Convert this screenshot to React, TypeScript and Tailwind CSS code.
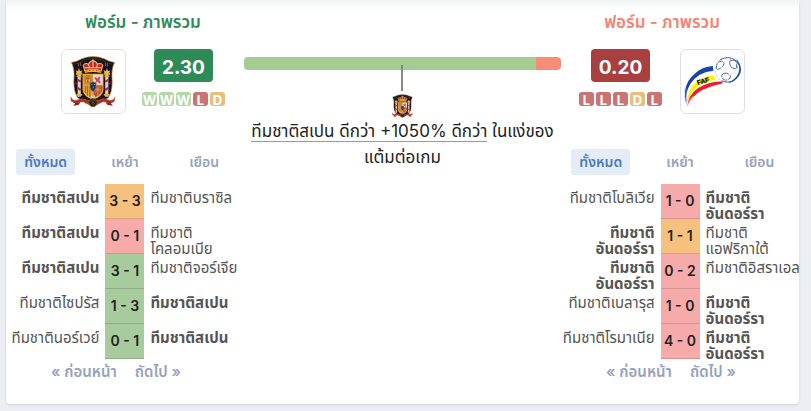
import {useState} from 'react';
import clsx from 'clsx';

type Result = 'W' | 'D' | 'L';

interface Match {home: string;
 away: string;
 score: string;
 result: Result;
 side: 'home' | 'away';}

const SPAIN = 'ทีมชาติสเปน';
const ANDORRA = 'ทีมชาติ\nอันดอร์รา';

const spainMatches: Match[] = [
 {home: SPAIN, away: 'ทีมชาติบราซิล', score: '3 - 3', result: 'D', side: 'home'},
 {home: SPAIN, away: 'ทีมชาติ\nโคลอมเบีย', score: '0 - 1', result: 'L', side: 'home'},
 {home: SPAIN, away: 'ทีมชาติจอร์เจีย', score: '3 - 1', result: 'W', side: 'home'},
 {home: 'ทีมชาติไซปรัส', away: SPAIN, score: '1 - 3', result: 'W', side: 'away'},
 {home: 'ทีมชาตินอร์เวย์', away: SPAIN, score: '0 - 1', result: 'W', side: 'away'},
];

const andorraMatches: Match[] = [
 {home: 'ทีมชาติโบลิเวีย', away: ANDORRA, score: '1 - 0', result: 'L', side: 'away'},
 {home: ANDORRA, away: 'ทีมชาติ\nแอฟริกาใต้', score: '1 - 1', result: 'D', side: 'home'},
 {home: ANDORRA, away: 'ทีมชาติอิสราเอล', score: '0 - 2', result: 'L', side: 'home'},
 {home: 'ทีมชาติเบลารุส', away: ANDORRA, score: '1 - 0', result: 'L', side: 'away'},
 {home: 'ทีมชาติโรมาเนีย', away: ANDORRA, score: '4 - 0', result: 'L', side: 'away'},
];

const pillColor = {W: 'bg-[#b5d6a7]', D: 'bg-[#e9bd7c]', L: 'bg-[#c97474]'};
const cellColor = {W: 'bg-[#a8cb9e] border-[#8fae87]', D: 'bg-[#f6c17f] border-[#d5a578]', L: 'bg-[#f6abaa] border-[#d59392]'};

function SpainCrest({className}: {className: string}) {
 return (<svg className={className} viewBox="31 16 132 148" aria-hidden="true">
 <path d="M35 34 Q52 31 65 23 Q97 11 129 23 Q142 31 159 34 Q149 52 152 86 Q153 119 141 135 Q120 151 97 161 Q73 151 53 135 Q41 119 42 86 Q45 52 35 34Z" fill="#17121f" stroke="#c5983a" strokeWidth="2" />
 <path d="M43 39 Q59 36 70 28 Q97 18 124 28 Q135 36 151 39" fill="none" stroke="#4e3b28" strokeWidth="2" />
 <path d="M55 36 v9 M61 34 v10 M133 34 v10 M139 36 v9" stroke="#8c6c2d" strokeWidth="2.5" />
 {/* crown */}
 <path d="M73 57 L69 42 Q74 34 84 39 Q89 29 97 29 Q105 29 110 39 Q120 34 125 42 L121 57Z" fill="#c22430" stroke="#f3c14c" strokeWidth="3" />
 <path d="M97 25 v24 M84 38 l3 13 M110 38 l-3 13 M73 49 h48" stroke="#f7d476" strokeWidth="3" />
 <path d="M72 57 Q97 49 122 57 L120 64 Q97 58 74 64Z" fill="#efb13e" />
 <path d="M76 59 h3 m7 -2 h3 m7 -1 h3 m7 1 h3 m7 2 h3" stroke="#b92a31" strokeWidth="3" />
 {/* pillars */}
 <path d="M53 67 h9 V132 h-9Z M132 67 h9 V132 h-9Z" fill="#d6d0d4" />
 <path d="M48 67 h18 M50 74 h14 M49 127 h17 M128 67 h18 M130 74 h14 M128 127 h17" stroke="#e7a637" strokeWidth="5" />
 <path d="M50 65 l-2 -9 5 3 4 -7 4 7 5 -3 -2 9Z M130 65 l-2 -9 5 3 4 -7 4 7 5 -3 -2 9Z" fill="#f2bd47" />
 <path d="M57 51 v5 M137 51 v5" stroke="#c83434" strokeWidth="4" />
 <path d="M53 84 l9 5 M53 107 l9 6 M132 89 l9 -5 M132 113 l9 -6" stroke="#bc2530" strokeWidth="6" />
 <path d="M47 95 h6 M141 95 h6" stroke="#bc2530" strokeWidth="5" />
 {/* quartered shield */}
 <path d="M67 66 H127 V113 Q124 133 97 141 Q70 133 67 113Z" fill="#e4b24c" />
 <path d="M70 69 H97 V98 H70Z" fill="#de8b2a" />
 <path d="M97 69 H124 V98 H97Z" fill="#e7d8dd" />
 <path d="M70 100 H96 V135 Q74 127 70 112Z" fill="#e9a22e" />
 <path d="M98 100 H124 V112 Q120 128 98 135Z" fill="#bd4a31" />
 <path d="M76 76 v-4 h4 v3 h4 v-3 h4 v4 M76 78 h13 v12 H75Z" fill="#f4c94f" stroke="#b2572a" strokeWidth="2" />
 <path d="M82 90 v-6 M78 81 h8" stroke="#763622" strokeWidth="3" />
 <path d="M104 76 l7 5 2 -7 6 3 -4 8 5 6 -5 3 -5 -6 -6 6 2 -10 -5 -3Z" fill="#b64b75" />
 <path d="M75 101 V121 M81 101 V129 M88 101 V132" stroke="#b8582b" strokeWidth="3" />
 <path d="M103 104 l16 15 M119 103 l-16 18 M102 112 h19 M111 102 v27" stroke="#eaa445" strokeWidth="2" />
 <path d="M88 92 Q97 87 106 92 V105 Q104 114 97 118 Q90 114 88 105Z" fill="#173974" stroke="#b68d43" strokeWidth="2" />
 <path d="M93 97 h2 m5 0 h2 m-5 8 h2" stroke="#d5b765" strokeWidth="3" />
 <path d="M91 133 L97 119 L103 133 L97 138Z" fill="#ddd7d2" />
 <path d="M97 121 v11" stroke="#8e5b61" strokeWidth="2" />
 {/* ribbon and ball */}
 <path d="M33 133 Q39 145 52 142 Q67 134 79 142 Q97 148 115 142 Q127 134 142 142 Q155 145 160 133 L159 145 Q151 150 139 149 Q124 144 113 151 Q97 156 81 151 Q70 144 55 149 Q42 150 34 145Z" fill="#b51f2c" stroke="#ce7b38" strokeWidth="1.5" />
 <path d="M36 147 l10 4 -6 7 15 -2 6 -7 M158 147 l-10 4 6 7 -15 -2 -6 -7" fill="#8f2027" />
 <circle cx="97" cy="149" r="12" fill="#24201d" stroke="#82612f" strokeWidth="2" />
 <path d="M87 146 l10 -5 10 5 M90 154 l7 -6 7 6 M97 141 v18" fill="none" stroke="#846937" strokeWidth="1.5" />
 </svg>);
}

function AndorraCrest({className}: {className: string}) {
 return (<svg className={className} viewBox="0 0 192 192" aria-hidden="true">
 <path d="M97 49 Q66 51 45 69 Q18 90 12 124 Q10 145 16 163 Q12 129 29 103 Q52 67 99 63Z" fill="#1846a2" />
 <path d="M13 115 Q10 142 16 163 M17 117 Q14 139 17 157" fill="none" stroke="#6f8cc3" strokeWidth="1.5" />
 <path d="M100 78 Q66 80 42 102 Q22 121 18 157 Q34 119 63 103 Q81 93 104 92Z" fill="#fff100" />
 <path d="M127 96 Q86 94 52 116 Q24 135 19 170 Q34 139 65 122 Q93 108 126 102Z" fill="#ec1d2b" />
 <path d="M17 171 Q19 149 28 137 M19 172 Q26 150 36 141" fill="none" stroke="#ffc2bd" strokeWidth="2" />
 <text x="51" y="107" transform="rotate(-17 51 107)" fontFamily="Liberation Sans" fontSize="20" fontWeight="900" fill="#15130f" stroke="#15130f" strokeWidth="1">FAF</text>
 <circle cx="142" cy="61" r="38" fill="white" stroke="#95a8cf" strokeWidth="1.5" strokeDasharray="9 3" />
 <path d="M119 30 Q145 15 168 33 Q190 57 174 80 Q155 106 124 94" fill="none" stroke="#2450a0" strokeWidth="2.5" />
 <path d="M170 30 Q191 57 174 81 Q163 95 148 99 Q169 88 176 70 Q184 50 170 30Z" fill="#1846a2" stroke="#1846a2" strokeWidth="2" />
 <g fill="white" stroke="#426bb2" strokeWidth="3">
 <path d="M108 57 Q107 35 123 34 Q135 35 129 47 Q121 59 110 59" strokeDasharray="16 3" />
 <path d="M150 31 Q145 48 157 55 Q168 60 173 52 Q165 54 172 39 Q165 29 150 31" />
 <path d="M129 72 Q141 66 151 79 Q151 91 135 92 Q121 87 125 76Z" strokeDasharray="18 3" />
 </g>
 </svg>);
}

function FormPills({results}: {results: Result[]}) {
 return (<div className="flex gap-0.5">
 {results.map((r, i) => (<span
 key={i}
 className={clsx('flex h-3.5 w-[15px] items-center justify-center rounded-[3px] pt-0.5 text-[13px] leading-3 font-bold text-white', pillColor[r])}
 >{r}</span>))}
 </div>);
}

function Rating({value, color, results}: {value: string; color: string; results: Result[]}) {
 return (<div className="flex flex-col items-center gap-2.5">
 <span className={clsx('rounded px-2 pt-1 text-[19px] leading-[29px] font-bold text-white', color)}>{value}</span>
 <FormPills results={results} />
 </div>);
}

function CrestBox({children}: {children: React.ReactNode}) {
 return (<div className="flex size-[65px] items-center justify-center rounded-md border border-[#dfe0e6] bg-white">
 {children}
 </div>);
}

function MatchList({matches}: {matches: Match[]}) {
 const [tab, setTab] = useState(0);

 return (<div>
 <div className="grid grid-cols-3 justify-items-center">
 {['ทั้งหมด', 'เหย้า', 'เยือน'].map((label, i) => (<button
 key={label}
 onClick={() => setTab(i)}
 className={clsx('rounded-[3px] px-2 text-sm leading-[26px] font-semibold', tab === i? 'bg-[#e4ecf6] text-[#4d7ac0]': 'text-[#95a2ba]')}
 >{label}</button>))}
 </div>
 <table className="mt-[9px] w-full table-fixed border-collapse text-[15px] leading-4 text-[#555]">
 <tbody>
 {matches.map((m, i) => (<tr key={i} className="align-top">
 <td className={clsx('p-0 pr-1.5 text-right', m.side === 'home' && 'font-bold')}>
 <div className="h-[35px] overflow-hidden pt-1.5 whitespace-pre">{m.home}</div>
 </td>
 <td className="w-[39px] p-0">
 <div className={clsx('h-[35px] border-b text-center text-sm leading-[34px] font-semibold whitespace-nowrap text-[#222]', cellColor[m.result])}>{m.score}</div>
 </td>
 <td className={clsx('p-0 pl-1.5', m.side === 'away' && 'font-bold')}>
 <div className="h-[35px] overflow-hidden pt-1.5 whitespace-pre">{m.away}</div>
 </td>
 </tr>))}
 </tbody>
 </table>
 <div className="mt-1 flex justify-center text-[15px] leading-[18px] font-semibold text-[#95a2ba]">
 <button className="mr-[18px]">« ก่อนหน้า</button>
 <button className="mr-[18px]">ถัดไป »</button>
 </div>
 </div>);
}

export default function App() {
 return (<div className="min-h-screen bg-[#ebeff3] pr-3 pb-[7px] pl-1.5 font-[Inter,'Noto_Sans_Thai','Noto_Sans',sans-serif]">
 <main className="rounded-b bg-white shadow-sm">
 <div className="h-2.5 bg-linear-to-b from-[#f0f3f3] to-white" />
 <div className="grid grid-cols-[3fr_4fr_3fr] pb-[23px]">
 <section>
 <div className="flex flex-col items-center pl-9">
 <h2 className="text-[17px] leading-6 font-semibold text-[#2e8b57]">ฟอร์ม - ภาพรวม</h2>
 <div className="mt-[15px] flex gap-4">
 <CrestBox><SpainCrest className="h-[54px] w-[46px]" /></CrestBox>
 <Rating value="2.30" color="bg-[#2e8b57]" results={['W', 'W', 'W', 'L', 'D']} />
 </div>
 </div>
 <div className="mt-[35px]"><MatchList matches={spainMatches} /></div>
 </section>

 <section className="flex flex-col items-center pt-[47px]">
 <div className="flex h-[13px] w-full overflow-hidden rounded">
 <div className="w-[92%] bg-[#a3cd92]" />
 <div className="flex-1 bg-[#f78d78]" />
 </div>
 <div className="relative -mt-[5px] h-[26px] w-0.5 bg-[#888]" />
 <SpainCrest className="mt-[3px] h-6 w-[21px]" />
 <p className="px-1 text-center text-[17px] leading-[26px] text-[#222]">
 <span className="border-b border-[#75be4b]">ทีมชาติสเปน ดีกว่า +1050% ดีกว่า</span> ในแง่ของ<br />แต้มต่อเกม
 </p>
 </section>

 <section>
 <div className="flex flex-col items-center pr-9">
 <h2 className="text-[17px] leading-6 font-semibold text-[#fa8072]">ฟอร์ม - ภาพรวม</h2>
 <div className="mt-[15px] flex gap-[18px]">
 <Rating value="0.20" color="bg-[#a94040]" results={['L', 'L', 'L', 'D', 'L']} />
 <CrestBox><AndorraCrest className="size-[63px]" /></CrestBox>
 </div>
 </div>
 <div className="mt-[35px]"><MatchList matches={andorraMatches} /></div>
 </section>
 </div>
 </main>
 </div>);
}
